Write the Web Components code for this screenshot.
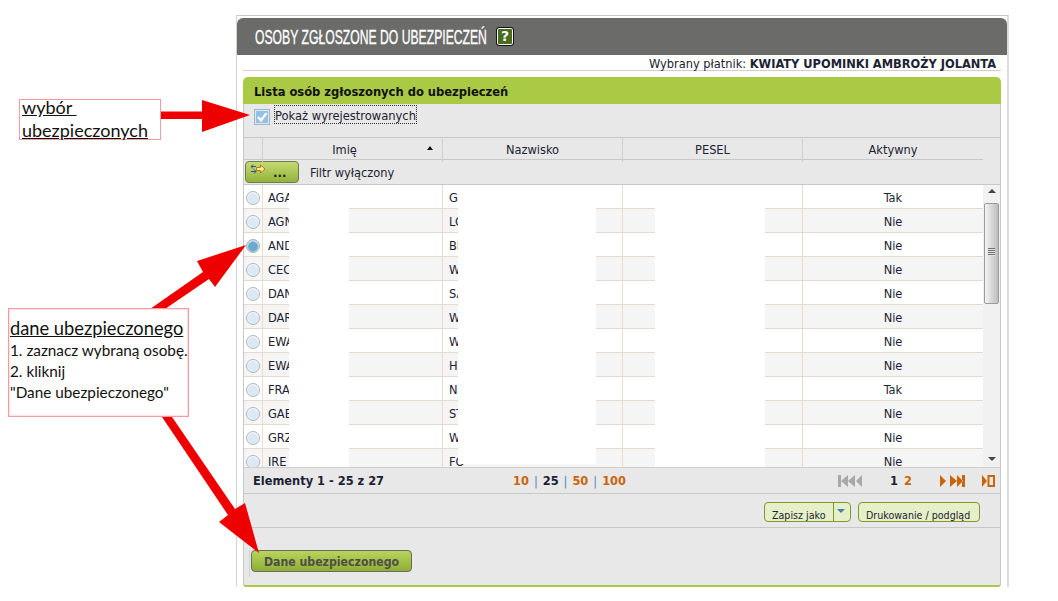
<!DOCTYPE html>
<html lang="pl">
<head>
<meta charset="utf-8">
<title>Osoby zgłoszone do ubezpieczeń</title>
<style>
html, body { margin: 0; background: #fff; }
body { font: 12.7px "DejaVu Sans Condensed", "DejaVu Sans", sans-serif; color: #1c2233; overflow: hidden; height: 601px; position: relative; }
</style>
</head>
<body>
<ins-frame>
    <ins-title slot="title">OSOBY ZGŁOSZONE DO UBEZPIECZEŃ</ins-title>
    <span slot="payer">Wybrany płatnik: <b>KWIATY UPOMINKI AMBROŻY JOLANTA</b></span>
    <ins-panel heading="Lista osób zgłoszonych do ubezpieczeń">
        <show-toggle>Pokaż wyrejestrowanych</show-toggle>
        <data-grid></data-grid>
        <grid-pager></grid-pager>
        <grid-export></grid-export>
        <grid-actions>Dane ubezpieczonego</grid-actions>
    </ins-panel>
</ins-frame>
<red-arrows></red-arrows>
<call-out style="left:19px;top:99px;width:138px;height:39px;" class="a">
    <u>wybór&nbsp;</u><br><u>ubezpieczonych</u>
</call-out>
<call-out style="left:8px;top:308px;width:178px;height:107px;" class="b">
    <u>dane ubezpieczonego</u>
    <small>1. zaznacz wybraną osobę.<br>2. kliknij<br>"Dane ubezpieczonego"</small>
</call-out>

<script>
// Outer white frame with the grey title bar and the payer line
class InsFrame extends HTMLElement {
    constructor() {
        super();
        this.attachShadow({ mode: 'open' }).innerHTML = `
        <style>
        :host { display: block; box-sizing: border-box; margin: 15px 0 0 236px; width: 773px; height: 572px; padding-top: 2px;
                border-top: 1px solid #c9c9c9; border-left: 1px solid #d4d4d4; border-right: 2px solid #dcdcdc; }
        .payer { margin: 0 6px; height: 16px; box-sizing: border-box; border-bottom: 1px solid #cfcfcf; text-align: right; padding-right: 5px;
                 line-height: 17px; white-space: nowrap; }
        .gap { height: 6px; }
        </style>
        <slot name="title"></slot>
        <div class="payer"><slot name="payer"></slot></div>
        <div class="gap"></div>
        <slot></slot>`;
    }
}
customElements.define('ins-frame', InsFrame);

class InsTitle extends HTMLElement {
    constructor() {
        super();
        this.attachShadow({ mode: 'open' }).innerHTML = `
        <style>
        :host { display: flex; align-items: center; height: 37px; background: #6b6c6a; border-radius: 6px 6px 0 0; padding-left: 18px; color: #fff; }
        .t { display: block; flex: none; font: 21px "Liberation Sans", sans-serif; -webkit-text-stroke: .35px #fff; white-space: nowrap; width: 232px; transform: scaleX(.58); transform-origin: 0 50%; }
        .q { box-sizing: border-box; width: 18px; height: 19px; margin-left: 9px; background: #4b6b1e; border: 1px solid #111; box-shadow: inset 0 0 0 1px #fff;
             border-radius: 3px; font: bold 14px "DejaVu Sans", sans-serif; line-height: 17px; text-align: center; }
        </style>
        <span class="t"><slot></slot></span><span class="q">?</span>`;
    }
}
customElements.define('ins-title', InsTitle);

// Green headed panel
class InsPanel extends HTMLElement {
    constructor() {
        super();
        this.attachShadow({ mode: 'open' }).innerHTML = `
        <style>
        :host { display: block; margin: 0 6px; }
        h2 { margin: 0; height: 27px; box-sizing: border-box; background: #aac944; border-radius: 5px 5px 0 0; padding-left: 11px;
             font: bold 12.8px/30px "DejaVu Sans Condensed", "DejaVu Sans", sans-serif; color: #111; }
        .body { background: #e8e8e8; border: 1px solid #c8c8c8; border-top: 0; border-bottom: 2px solid #aac944; border-radius: 0 0 3px 3px; }
        </style>
        <h2></h2><div class="body"><slot></slot></div>`;
        this.shadowRoot.querySelector('h2').textContent = this.getAttribute('heading');
    }
}
customElements.define('ins-panel', InsPanel);

class ShowToggle extends HTMLElement {
    constructor() {
        super();
        this.attachShadow({ mode: 'open' }).innerHTML = `
        <style>
        :host { display: flex; height: 33px; box-sizing: border-box; padding: 5px 0 0 10px; align-items: flex-start; }
        .l { margin: -4px 0 0 4px; border: 1px dotted #333; height: 17px; line-height: 20px; white-space: nowrap; font-size: 12.8px; }
        </style>
        <svg width="16" height="16" viewBox="0 0 16 16">
            <rect x=".5" y=".5" width="15" height="15" fill="#dbe8f4" stroke="#a4b5c6"/>
            <rect x="2" y="2" width="12" height="12" fill="#93c1e6"/>
            <path d="M4 8l3 3.500L12.500 4" fill="none" stroke="#fff" stroke-width="2.200"/>
        </svg>
        <span class="l"><slot></slot></span>`;
    }
}
customElements.define('show-toggle', ShowToggle);

class RadioDot extends HTMLElement {
    constructor() {
        super();
        const on = this.hasAttribute('on');
        this.attachShadow({ mode: 'open' }).innerHTML = `
        <style>
        :host { display: block; width: 14px; height: 14px; box-sizing: border-box; border-radius: 50%; border: 1px solid ${on ? '#a3b5a5' : '#aab6c2'};
                background: radial-gradient(circle at 50% 55%, ${on ? '#6ea9d6 0, #6ea9d6 48%, #c8dcea 62%' : '#dce8f3 0, #dce8f3 50%, #f8fafb 72%'}); }
        </style>`;
    }
}
customElements.define('radio-dot', RadioDot);

// Grid: column headings, filter line, scrolling rows
const gridRows = [
    ['AGA', 'GU', 'Tak'], ['AGN', 'LO', 'Nie'], ['AND', 'BR', 'Nie'], ['CEC', 'WO', 'Nie'],
    ['DAN', 'SA', 'Nie'], ['DAR', 'WI', 'Nie'], ['EWA', 'WO', 'Nie'], ['EWA', 'HE', 'Nie'],
    ['FRA', 'NI', 'Tak'], ['GAB', 'ST', 'Nie'], ['GRZ', 'WI', 'Nie'], ['IRE', 'FO', 'Nie']
];
const gridCols = '19px 180px 180px 180px 180px';

class DataGrid extends HTMLElement {
    constructor() {
        super();
        const rows = gridRows.map((r, i) => `
            <div class="row ${i % 2 ? 'alt' : ''}">
                <div class="c radio"><radio-dot ${i === 2 ? 'on' : ''}></radio-dot></div>
                <div class="c">${r[0]}</div><div class="c">${r[1]}</div><div class="c"></div><div class="c mid">${r[2]}</div>
            </div>`).join('');
        this.attachShadow({ mode: 'open' }).innerHTML = `
        <style>
        :host { display: block; }
        .top { border-top: 1px solid #c8c8c8; }
        .head { display: grid; grid-template-columns: ${gridCols}; width: 739px; height: 22px; box-sizing: border-box; border-bottom: 1px solid #c8c8c8; }
        .head div { border-right: 1px solid #d0d0d0; text-align: center; line-height: 24px; position: relative; }
        .head div:last-child { border-right: 0; }
        .head .name { padding-right: 16px; }
        .sort { position: absolute; right: 9px; top: 8px; width: 0; height: 0; border: 3.5px solid transparent; border-top: 0; border-bottom: 4px solid #111; }
        .filter { display: flex; align-items: center; height: 25px; box-sizing: border-box; border-bottom: 1px solid #c8c8c8; padding: 0 0 1px 1px; }
        .filter button { box-sizing: border-box; width: 54px; height: 22px; padding: 0 0 0 5px; display: flex; align-items: center; gap: 7px; border: 1px solid #6f7a55; border-radius: 4px;
                 background: linear-gradient(#c3db72, #93b33b); font: bold 12px/14px "DejaVu Sans", sans-serif; color: #222; }
        .filter svg { margin-top: -6px; }
        .filter b { padding-top: 2px; }
        .filter span { margin-left: 11px; padding-top: 2px; }
        .list { display: flex; height: 282px; overflow: hidden; position: relative; }
        .rows { width: 739px; background: #fff; }
        .row { display: grid; grid-template-columns: ${gridCols}; height: 24px; box-sizing: border-box; border-bottom: 1px solid #e6d9cb; }
        .row.alt { background: #f5f5f5; }
        .c { border-right: 1px solid #eddcc8; padding-left: 5px; line-height: 26px; overflow: hidden; white-space: nowrap; }
        .c:last-child { border-right: 0; }
        .c.mid { text-align: center; padding: 0; }
        .c.radio { padding: 6px 0 0 2px; box-sizing: border-box; }
        .c:nth-child(3) { padding-left: 6px; }
        .hide { position: absolute; background: #fff; top: 0; }
        scroll-track { flex: none; }
        </style>
        <div class="top"><div class="head"><div></div><div class="name">Imię<i class="sort"></i></div><div>Nazwisko</div><div>PESEL</div><div>Aktywny</div></div></div>
        <div class="filter">
            <button type="button" aria-label="Filtr">
                <svg width="15" height="10" viewBox="0 0 15 10">
                    <path d="M0 2.500h5M0 7.500h5" stroke="#3d4f86"/>
                    <path d="M2 .5l-2 2 2 2M3 5.500l2 2-2 2" fill="none" stroke="#3d4f86"/>
                    <path d="M5.500 3.500h4V1L14 5 9.500 9V6.500h-4z" fill="#fbe9a8" stroke="#b47b12"/>
                </svg><b>...</b></button>
            <span>Filtr wyłączony</span>
        </div>
        <div class="list">
            <div class="rows">${rows}</div>
            <scroll-track></scroll-track>
            <div class="hide" style="left:45px;width:60px;height:282px"></div>
            <div class="hide" style="left:214px;width:138px;height:279px"></div>
            <div class="hide" style="left:411px;width:110px;height:282px"></div>
        </div>`;
    }
}
customElements.define('data-grid', DataGrid);

class ScrollTrack extends HTMLElement {
    constructor() {
        super();
        this.attachShadow({ mode: 'open' }).innerHTML = `
        <style>
        :host { display: block; width: 18px; height: 282px; background: #f1f1f1; position: relative; }
        .up, .down { position: absolute; left: 5px; width: 0; height: 0; border: 4px solid transparent; }
        .up { top: 4px; border-top: 0; border-bottom: 4px solid #444; }
        .down { bottom: 6px; border-bottom: 0; border-top: 4px solid #444; }
        .thumb { position: absolute; left: 1px; top: 18px; width: 15px; height: 101px; box-sizing: border-box; border: 1px solid #9b9b9b; border-radius: 2px;
                 background: linear-gradient(90deg, #f4f4f4, #dadada 45%, #bdbdbd); }
        .grip { position: absolute; left: 3px; top: 44px; width: 7px; height: 8px; background: repeating-linear-gradient(#6e6e6e 0 1px, #e6e6e6 1px 2px); }
        </style>
        <div class="up"></div><div class="thumb"><div class="grip"></div></div><div class="down"></div>`;
    }
}
customElements.define('scroll-track', ScrollTrack);

class GridPager extends HTMLElement {
    constructor() {
        super();
        const o = '#c8650a', g = '#a8a8a8';
        this.attachShadow({ mode: 'open' }).innerHTML = `
        <style>
        :host { display: flex; align-items: center; height: 27px; box-sizing: border-box; border-top: 1px solid #cfcfcf; border-bottom: 1px solid #c8c8c8; padding-left: 9px; font-weight: bold; color: #1c2233; }
        .count { width: 260px; white-space: nowrap; }
        .sizes { width: 325px; white-space: nowrap; word-spacing: 1px; }
        .sizes a { color: ${o}; } .sizes i { color: #4d86b5; font-style: normal; font-weight: normal; }
        .nav { display: flex; align-items: center; }
        .pages { width: 50px; margin-left: 28px; } .pages a { color: ${o}; margin-left: 6px; }
        svg { display: block; }
        </style>
        <span class="count">Elementy 1 - 25 z 27</span>
        <span class="sizes"><a>10</a> <i>|</i> 25 <i>|</i> <a>50</a> <i>|</i> <a>100</a></span>
        <span class="nav">
            <svg width="24" height="14" viewBox="0 0 24 14"><path d="M0 1h3v12H0zM10 1v12L3 7zM17 1v12l-7-6zM24 1v12l-6-6z" fill="${g}"/></svg>
            <span class="pages">1<a>2</a></span>
            <svg width="25" height="14" viewBox="0 0 25 14"><path d="M0 1v12l6-6zM10 1v12l7-6zM17 1v12l6-6zM22 1h3v12h-3z" fill="${o}"/></svg>
            <svg style="margin-left:17px" width="13" height="14" viewBox="0 0 13 14"><path d="M0 1v12l5-6z" fill="${o}"/><rect x="6.500" y="2" width="5.500" height="10" fill="none" stroke="${o}" stroke-width="2"/></svg>
        </span>`;
    }
}
customElements.define('grid-pager', GridPager);

class GridExport extends HTMLElement {
    constructor() {
        super();
        this.attachShadow({ mode: 'open' }).innerHTML = `
        <style>
        :host { display: flex; justify-content: flex-end; gap: 7px; height: 34px; box-sizing: border-box; border-bottom: 1px solid #c8c8c8; padding: 8px 20px 0 0; font-size: 10.6px; }
        .b { display: flex; height: 20px; box-sizing: border-box; background: #e6f0c8; border: 1px solid #7e9a2c; border-radius: 4px; line-height: 24px; white-space: nowrap; overflow: hidden; }
        .b span { padding: 0 7px; }
        .dd { width: 16px; border-left: 1px solid #7e9a2c; position: relative; }
        .dd::after { content: ""; position: absolute; left: 3px; top: 6px; border: 4px solid transparent; border-bottom: 0; border-top: 4px solid #4d7ca6; }
        </style>
        <div class="b" style="width:87px"><span style="flex:1;padding:0 0 0 7px">Zapisz jako</span><div class="dd"></div></div>
        <div class="b" style="width:122px"><span>Drukowanie / podgląd</span></div>`;
    }
}
customElements.define('grid-export', GridExport);

class GridActions extends HTMLElement {
    constructor() {
        super();
        this.attachShadow({ mode: 'open' }).innerHTML = `
        <style>
        :host { display: block; height: 57px; box-sizing: border-box; padding: 22px 0 0 5px; }
        .w { border-left: 1px solid #d2d2d2; height: 27px; padding-left: 1px; }
        button { display: block; width: 161px; height: 22px; box-sizing: border-box; padding: 1px 0 0; border: 1px solid #6a6a5e; border-radius: 4px; background: linear-gradient(#b9d45e, #8fae35);
                 font: bold 12.2px "DejaVu Sans Condensed", "DejaVu Sans", sans-serif; color: #4e4e46; }
        </style>
        <div class="w"><button type="button"><slot></slot></button></div>`;
    }
}
customElements.define('grid-actions', GridActions);

// Red annotation arrows drawn over the screenshot
class RedArrows extends HTMLElement {
    constructor() {
        super();
        this.attachShadow({ mode: 'open' }).innerHTML = `
        <style>
        :host { position: absolute; left: 0; top: 0; display: block; pointer-events: none; }
        svg { display: block; }
        </style>
        <svg width="1058" height="601" viewBox="0 0 1058 601" fill="#ee0000">
            <path d="M155 111.500H202V100L250 115 202 132V119H155z"/>
            <path d="M150 309L203 272 197 261 246 245 215 287 209 279 165 309z"/>
            <path d="M160 414L170 414 235 509 245 503 259 553 219 522 228 515z"/>
        </svg>`;
    }
}
customElements.define('red-arrows', RedArrows);

// Pink-framed note placed freely on the page
class CallOut extends HTMLElement {
    constructor() {
        super();
        this.attachShadow({ mode: 'open' }).innerHTML = `
        <style>
        :host { position: absolute; display: block; box-sizing: content-box; background: #fff; border: 1px solid #f59aa0; color: #111; font: 18px/23px Lato, "Open Sans", sans-serif; white-space: nowrap; padding-left: 2px; }
        :host(.a) .in { margin-top: -4px; }
        :host(.b) { padding-left: 1px; width: auto; font-size: 18.3px; line-height: 21px; box-shadow: inset 0 0 2px #f59aa0; }
        :host(.b) .in { padding-top: 9px; }
        ::slotted(small) { display: block; font-size: 15.3px; line-height: 21px; margin-top: 1px; }
        </style>
        <div class="in"><slot></slot></div>`;
    }
}
customElements.define('call-out', CallOut);
</script>
</body>
</html>
